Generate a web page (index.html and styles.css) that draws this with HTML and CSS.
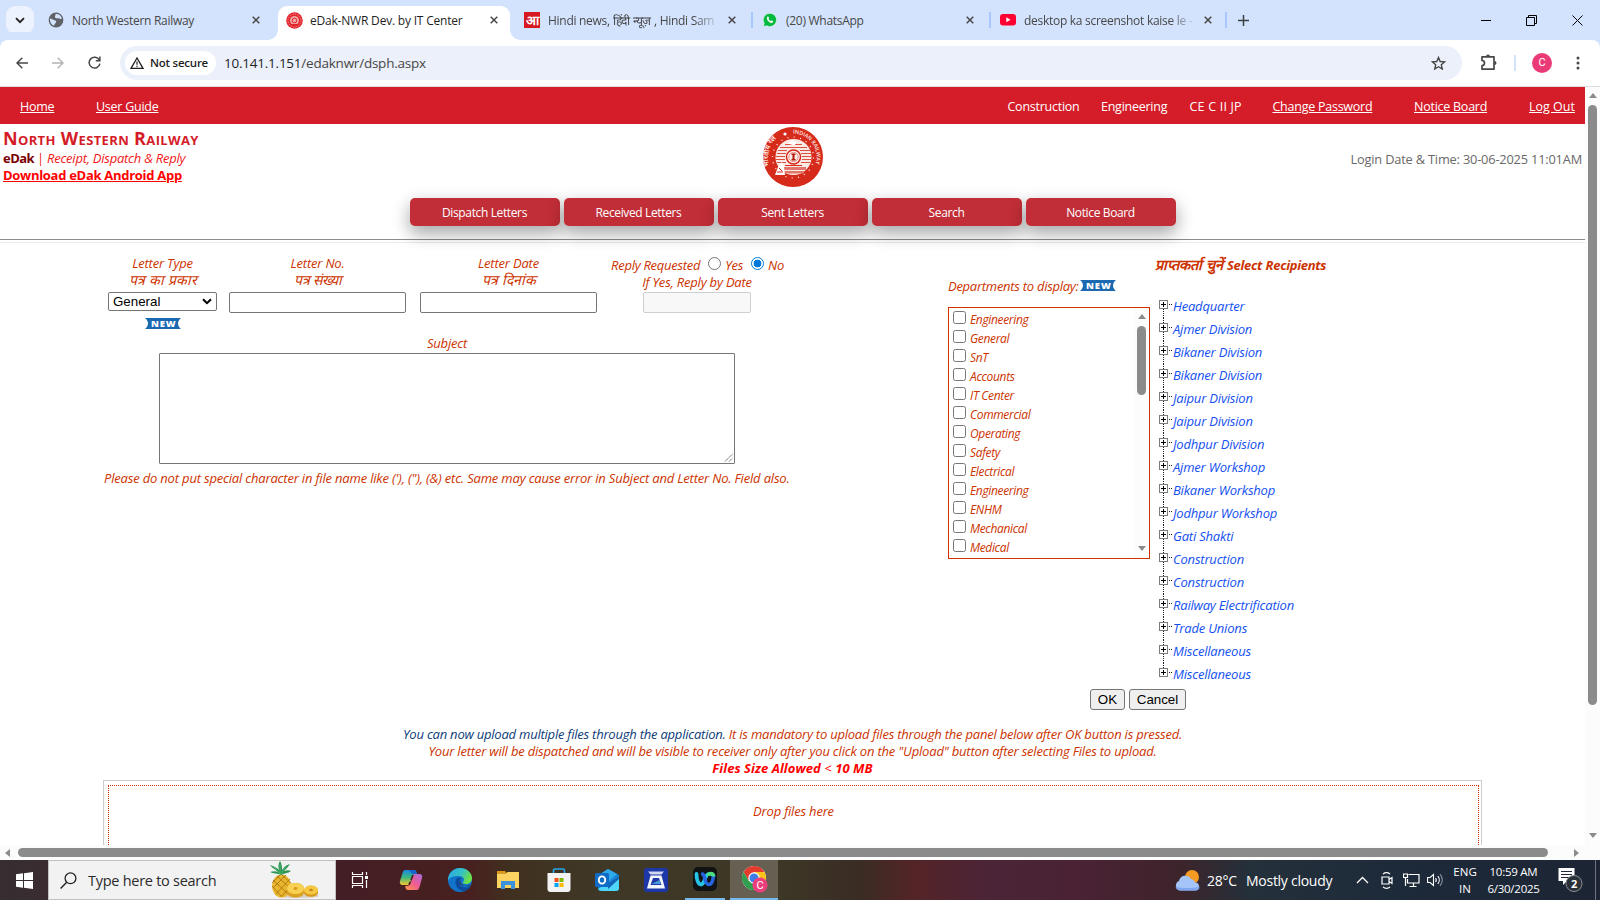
FILE: index.html
```html
<!DOCTYPE html>
<html lang="en">
<head>
<meta charset="utf-8">
<title>eDak-NWR Dev. by IT Center</title>
<link rel="stylesheet" href="styles.css">
</head>
<body>
<div class="desktop">

<header class="tabstrip">
  <div class="tab-search"><svg width="10" height="7" viewBox="0 0 10 7"><path d="M1 1.2l4 4 4-4" fill="none" stroke="#1f1f1f" stroke-width="1.8"/></svg></div>
  <div class="tab tab-1">
    <svg class="fav" width="16" height="16" viewBox="0 0 16 16"><circle cx="8" cy="8" r="7.4" fill="#5f6368"/><path d="M2 6.500c2 0 2.500 1.500 4.500 1.700 1.500.2 2 1 1.500 2.300-.5 1-1.700 1-1.900 3.300C3.500 13 1.700 10 2 6.500zM7.500 2c3-.6 5.700 1.500 6.300 4.500-1.800 1.300-2.600-.4-4.300-.2C8 6.400 6.500 5.700 7 4.200c.2-1 .9-.9.5-2.200z" fill="#d3e3fd"/></svg>
    <span class="tab-title">North Western Railway</span>
    <svg class="x" width="8" height="8" viewBox="0 0 8 8"><path d="M.7.7l6.600 6.600M7.300.7L.7 7.300"/></svg>
  </div>
  <div class="tab tab-2 active">
    <svg class="fav" width="17" height="17" viewBox="0 0 17 17"><circle cx="8.500" cy="8.500" r="8.300" fill="#e3262e"/><circle cx="8.500" cy="8.500" r="6.500" fill="none" stroke="#f79a9d" stroke-width=".8" stroke-dasharray="1.500 1"/><circle cx="8.500" cy="8.500" r="4.500" fill="#f6a5a7"/><circle cx="8.500" cy="8.500" r="2.300" fill="none" stroke="#e3262e"/><path d="M4 12.500h7" stroke="#e3262e"/></svg>
    <span class="tab-title">eDak-NWR Dev. by IT Center</span>
    <svg class="x" width="8" height="8" viewBox="0 0 8 8"><path d="M.7.7l6.600 6.600M7.300.7L.7 7.300"/></svg>
  </div>
  <div class="tab tab-3">
    <span class="fav amar">आ</span>
    <span class="tab-title fade">Hindi news, हिंदी न्यूज़ , Hindi Sam</span>
    <svg class="x" width="8" height="8" viewBox="0 0 8 8"><path d="M.7.7l6.600 6.600M7.300.7L.7 7.300"/></svg>
  </div>
  <div class="tab tab-4">
    <svg class="fav" width="14" height="14" viewBox="0 0 14 14"><path d="M7 .2a6.700 6.700 0 1 1-3.300 12.600L.3 13.700l.9-3.300A6.700 6.700 0 0 1 7 .2z" fill="#00b93f" stroke="#fff" stroke-width=".6"/><path d="M4.400 3.700c.5-.5 1-.3 1.200.2l.4 1c.1.400-.1.600-.5 1 .5 1 1.300 1.700 2.300 2.200.5-.5.7-.8 1-.6l1.200.6c.5.3 0 1.400-.7 1.700-1 .4-2.500-.1-3.900-1.500C3.900 6.800 3.500 4.800 4.400 3.700z" fill="#fff"/></svg>
    <span class="tab-title">(20) WhatsApp</span>
    <svg class="x" width="8" height="8" viewBox="0 0 8 8"><path d="M.7.7l6.600 6.600M7.300.7L.7 7.300"/></svg>
  </div>
  <div class="tab tab-5">
    <svg class="fav" width="16" height="12" viewBox="0 0 16 12"><rect width="16" height="11.500" rx="3" fill="#ff0033"/><path d="M6.300 3.300v5l4.200-2.500z" fill="#fff"/></svg>
    <span class="tab-title fade">desktop ka screenshot kaise le -</span>
    <svg class="x" width="8" height="8" viewBox="0 0 8 8"><path d="M.7.7l6.600 6.600M7.300.7L.7 7.300"/></svg>
  </div>
  <svg class="new-tab" width="11" height="11" viewBox="0 0 11 11"><path d="M5.500 0v11M0 5.500h11" stroke="#3c4043" stroke-width="1.500"/></svg>
  <div class="win">
    <svg width="10" height="11" viewBox="0 0 10 11"><path d="M0 5.500h10" stroke="#000"/></svg>
    <svg width="11" height="11" viewBox="0 0 11 11"><path d="M.5 2.500h8v8h-8zM2.500 2.500v-2h8v8h-2" fill="none" stroke="#000"/></svg>
    <svg width="11" height="11" viewBox="0 0 11 11"><path d="M.5.5l10 10M10.500.5l-10 10" stroke="#000"/></svg>
  </div>
</header>

<div class="toolbar">
  <svg width="12" height="12" viewBox="0 0 12 12"><path d="M12 6H1M6.300.7L1 6l5.300 5.300" fill="none" stroke="#474747" stroke-width="1.500"/></svg>
  <svg width="12" height="12" viewBox="0 0 12 12"><path d="M0 6h11M5.700.7L11 6l-5.300 5.300" fill="none" stroke="#b4b4b4" stroke-width="1.500"/></svg>
  <svg class="reload" width="13" height="13" viewBox="0 0 13 13"><path d="M11.300 4A5.400 5.400 0 1 0 11.900 7.600M11.900.6v4.100H7.800" fill="none" stroke="#474747" stroke-width="1.500"/></svg>
  <div class="omnibox">
    <span class="chip"><svg width="14" height="12" viewBox="0 0 14 12"><path d="M7 1L1 11.300h12z" fill="none" stroke="#1f1f1f" stroke-width="1.300"/><path d="M7 4.500v3.300M7 8.700V10" stroke="#1f1f1f" stroke-width="1.200"/></svg>Not secure</span>
    <span class="url"><b>10.141.1.151</b>/edaknwr/dsph.aspx</span>
    <svg class="star" width="15" height="14" viewBox="0 0 15 14"><path d="M7.500 1.500l1.700 4 4.300.4-3.200 2.900 1 4.200-3.800-2.300L3.700 13l1-4.200L1.500 5.900l4.300-.4z" fill="none" stroke="#474747" stroke-width="1.400"/></svg>
  </div>
  <svg class="ext" width="18" height="17" viewBox="0 0 18 17"><path d="M2 2.800h12v12.400H2v-3.700a2.500 2.500 0 0 0 0-5z" fill="none" stroke="#474747" stroke-width="1.700" stroke-linejoin="round"/><path d="M6 2.500a2 2 0 0 1 4 0zM14.500 7a2 2 0 0 1 0 4z" fill="#474747"/></svg>
  <i class="tb-sep"></i>
  <span class="avatar">C</span>
  <svg class="dots" width="4" height="14" viewBox="0 0 4 14"><g fill="#474747"><circle cx="2" cy="2" r="1.500"/><circle cx="2" cy="7" r="1.500"/><circle cx="2" cy="12" r="1.500"/></g></svg>
</div>

<div class="viewport">
 <div class="page">
  <nav class="topnav">
    <a>Home</a><a>User Guide</a><span>Construction</span><span>Engineering</span><span class="post">CE C II JP</span><a>Change Password</a><a>Notice Board</a><a class="out">Log Out</a>
  </nav>
  <div class="brand">
    <div class="brand-left">
      <div class="brand-name">North Western Railway</div>
      <div class="brand-sub"><b>eDak</b> | <i>Receipt, Dispatch &amp; Reply</i></div>
      <div class="brand-app">Download eDak Android App</div>
    </div>
    <svg class="logo" width="60" height="60" viewBox="0 0 60 60">
      <defs><path id="arcR" d="M30 6.500A23.500 23.500 0 0 1 41.750 50.350"/><path id="arcL" d="M6.500 38.500A25 25 0 0 1 18.500 7.800"/></defs>
      <circle cx="30" cy="30" r="30" fill="#d62a1a"/>
      <text class="logo-txt"><textPath href="#arcR">INDIAN RAILWAY</textPath></text>
      <text class="logo-txt dev"><textPath href="#arcL">भारतीय रेल</textPath></text>
      <circle cx="22" cy="7" r="1.600" fill="#fff"/>
      <circle cx="30" cy="30.500" r="20.500" fill="none" stroke="#ffe4de" stroke-width="1.200" stroke-dasharray="1.200 5.240"/>
      <circle cx="30.500" cy="30" r="18" fill="#fbe9e5"/>
      <path d="M22 17.500h17M17 20.500h27M15 23.500h9M37 23.500h10M14 26.500h9M38 26.500h10M13 29.500h9M39 29.500h9M13 32.500h9M39 32.500h9M14 35.500h9M38 35.500h9" stroke="#dc5040" stroke-width="1.100"/>
      <path d="M18 40h25v3H18zM20 44h21v2.500H22z" fill="#e2766a"/>
      <path d="M24.500 16.500l5-3 4 2-2 3z" fill="#fff"/>
      <circle cx="30.500" cy="30" r="7" fill="#fff" stroke="#d62a1a" stroke-width="1.500"/>
      <circle cx="30.500" cy="30" r="4.800" fill="#fbe9e5" stroke="#e2766a" stroke-width=".8"/>
      <path d="M28.500 26.500h4v1.500h-1v4h1v1.500h-4V32h1v-4h-1z" fill="#b4180c"/><path d="M22 38.500h17" stroke="#d62a1a"/>
      <path d="M12 48l3-8 4-5 2 5 1 8z" fill="#fff"/><path d="M14 45h6M16 41l3 3" stroke="#d62a1a"/>
    </svg>
    <div class="login">Login Date &amp; Time: 30-06-2025 11:01AM</div>
  </div>
  <div class="menu">
    <span>Dispatch Letters</span><span>Received Letters</span><span>Sent Letters</span><span>Search</span><span>Notice Board</span>
  </div>
  <div class="rule"></div>

  <div class="main">
    <section class="letter">
      <div class="fields">
        <label class="field">Letter Type<span class="hi">पत्र का प्रकार</span>
          <span class="select">General<svg width="10" height="7" viewBox="0 0 10 7"><path d="M1 1.200l4 4 4-4" fill="none" stroke="#000" stroke-width="2"/></svg></span>
          <svg class="new" width="36" height="11" viewBox="0 0 36 11"><path d="M0 0h36c-4 3.500-4 7.500 0 11H0c4-3.500 4-7.500 0-11z" fill="#1b69b1"/><text x="6" y="9.300" textLength="24.500">NEW</text></svg>
        </label>
        <label class="field">Letter No.<span class="hi">पत्र संख्या</span><span class="box"></span></label>
        <label class="field">Letter Date<span class="hi">पत्र दिनांक</span><span class="box"></span></label>
        <div class="field reply">
          <div class="radios">Reply Requested<i class="radio"></i>Yes<i class="radio on"></i>No</div>
          <div>If Yes, Reply by Date</div>
          <span class="box disabled"></span>
        </div>
      </div>
      <div class="subject">
        <div>Subject</div>
        <div class="area"><svg width="9" height="9" viewBox="0 0 9 9"><path d="M1 8.500L8.500 1M5 8.500L8.500 5" stroke="#555" stroke-width=".9" stroke-dasharray="1.600 .4"/></svg></div>
      </div>
      <p class="note">Please do not put special character in file name like ('), ("), (&amp;) etc. Same may cause error in Subject and Letter No. Field also.</p>
    </section>

    <section class="depts">
      <div class="depts-head">Departments to display:<svg class="new" width="36" height="11" viewBox="0 0 36 11"><path d="M0 0h36c-4 3.500-4 7.500 0 11H0c4-3.500 4-7.500 0-11z" fill="#1b69b1"/><text x="6" y="9.300" textLength="24.500">NEW</text></svg></div>
      <div class="list">
        <ul>
          <li><i></i>Engineering</li><li><i></i>General</li><li><i></i>SnT</li><li><i></i>Accounts</li><li><i></i>IT Center</li><li><i></i>Commercial</li><li><i></i>Operating</li><li><i></i>Safety</li><li><i></i>Electrical</li><li><i></i>Engineering</li><li><i></i>ENHM</li><li><i></i>Mechanical</li><li><i></i>Medical</li>
        </ul>
        <div class="vbar inner"><i class="up"></i><b></b><i class="down"></i></div>
      </div>
    </section>

    <section class="recips">
      <div class="recips-head"><span class="hi">प्राप्तकर्ता चुनें</span> Select Recipients</div>
      <ul class="tree">
        <li>Headquarter</li><li>Ajmer Division</li><li>Bikaner Division</li><li>Bikaner Division</li><li>Jaipur Division</li><li>Jaipur Division</li><li>Jodhpur Division</li><li>Ajmer Workshop</li><li>Bikaner Workshop</li><li>Jodhpur Workshop</li><li>Gati Shakti</li><li>Construction</li><li>Construction</li><li>Railway Electrification</li><li>Trade Unions</li><li>Miscellaneous</li><li>Miscellaneous</li>
      </ul>
    </section>
  </div>

  <div class="actions"><span class="btn ok">OK</span><span class="btn cancel">Cancel</span></div>
  <div class="messages">
    <div class="m1"><span>You can now upload multiple files through the application.</span> It is mandatory to upload files through the panel below after OK button is pressed.</div>
    <div>Your letter will be dispatched and will be visible to receiver only after you click on the "Upload" button after selecting Files to upload.</div>
    <div class="size"><b>Files Size Allowed</b> &lt; <b>10 MB</b></div>
  </div>
  <div class="drop"><div>Drop files here</div></div>
 </div>
 <div class="vbar outer"><i class="up"></i><b></b><i class="down"></i></div>
</div>
<div class="hbar"><i class="left"></i><b></b><i class="right"></i></div>

<footer class="taskbar">
  <div class="start"><svg width="17" height="17" viewBox="0 0 17 17"><path d="M0 2.300l7-1v6.700H0zM8 1.200L17 0v8H8zM0 9h7v6.700l-7-1zM8 9h9v8l-9-1.200z" fill="#fff"/></svg></div>
  <div class="search">
    <svg width="17" height="17" viewBox="0 0 17 17"><circle cx="10.500" cy="6.300" r="5.400" fill="none" stroke="#222" stroke-width="1.300"/><path d="M6.700 10.200L.6 16.400" stroke="#222" stroke-width="1.400"/></svg>
    <span>Type here to search</span>
    <svg class="pine" width="52" height="38" viewBox="0 0 52 38">
      <ellipse cx="30" cy="35" rx="20" ry="2" fill="#d6d2c6"/>
      <ellipse cx="12.500" cy="25" rx="9.500" ry="11.500" fill="#e9b52c"/>
      <path d="M4 19l15 14M3 25l10 11M8 15l14 13M13 14l9 8M21 18L7 33M22 25L12 36M17 14L4 27M11 14l-8 8" stroke="#ad7712" stroke-width=".9"/>
      <path d="M12 14C9 12 4 13 1 11c3-1 6-1 8 0C6 8 3 7 1 4c4 1 7 3 9 5C9 6 9 3 11 0c2 3 2 6 2 9 2-3 4-5 8-6-2 3-4 5-6 7 3-1 5-1 7 0-2 2-6 2-10 4z" fill="#2f9553"/><path d="M11 3v10M5 6l6 7M17 5l-5 8" stroke="#54bd78" stroke-width=".8"/>
      <path d="M18 28c0-8 17-8 17 0v4c-1 6-16 6-17 0z" fill="#dca022"/><ellipse cx="26.500" cy="27.500" rx="8.500" ry="5.500" fill="#f8d152"/><ellipse cx="26.500" cy="27.500" rx="2" ry="1.400" fill="#d99a22"/>
      <path d="M35 30c0-7 14-7 14 0v2c-1 5-13 5-14 0z" fill="#d9991c"/><ellipse cx="42" cy="29" rx="7" ry="4.500" fill="#f5c944"/><ellipse cx="42" cy="29" rx="2" ry="1.300" fill="#c98a18"/>
    </svg>
  </div>
  <div class="apps">
    <div><svg width="18" height="16" viewBox="0 0 18 16"><path d="M1.500 0v2.500h10V0M1.500 4.500h10v7h-10zM1.500 16v-2.500h10V16M15.500 0v3M15.500 8v8" fill="none" stroke="#fff" stroke-width="1.200"/><path d="M14 4h3v3h-3z" fill="#fff"/></svg></div>
    <div class="right"><svg width="24" height="24" viewBox="0 0 24 24"><defs><linearGradient id="c1" x1="0" y1="0" x2="0" y2="1"><stop offset="0" stop-color="#178ae4"/><stop offset=".5" stop-color="#3fb87c"/><stop offset="1" stop-color="#f2c92f"/></linearGradient><linearGradient id="c2" x1="1" y1="0" x2="0" y2="1"><stop offset="0" stop-color="#a86be0"/><stop offset=".5" stop-color="#ef5c93"/><stop offset="1" stop-color="#fb9646"/></linearGradient></defs><path d="M6 2h9c2 0 2.500 2 3 4l-4 1-4 10H4c-3 0-3.500-2-3-4L3.500 5C4 3 5 2 6 2z" fill="url(#c1)"/><path d="M9 2h6c2 0 2.500 2 3 4h-4c-2 0-2-3-5-4z" fill="#1763d0"/><path d="M18 22H9c-2 0-2.500-2-3-4 4 0 5-1 6-4l2-6c.5-1.500 1-2 3-2h3c3 0 3.500 2 3 4l-2.500 9c-.5 2-1.500 3-2.500 3z" fill="url(#c2)"/><path d="M12 12l2-5M10 17l1-3" stroke="#44201f" stroke-width="1.600"/></svg></div>
    <div class="right"><svg width="24" height="24" viewBox="0 0 24 24"><defs><linearGradient id="e1" x1="0" y1="0" x2="1" y2=".4"><stop offset="0" stop-color="#2ba7e6"/><stop offset=".6" stop-color="#35c1c4"/><stop offset="1" stop-color="#6be048"/></linearGradient></defs><circle cx="12" cy="12" r="12" fill="#1173c9"/><path d="M0 11C1 4 6 0 12 0c7 0 12 5 12 10 0 4-3 6-6 6-2.500 0-4-1-3-2 2-2 1-6-4-6C6 8 1 9 0 13z" fill="url(#e1)"/><path d="M9 10c-4 5 0 13 8 13 2-1 4-2 5.500-4.500-5 2-11 1-11-4.500 0-2 1-3 2-3.500-1-1-3-1.500-4.500-.5z" fill="#0b4c9c"/><path d="M12.500 12c-3 4 3 8 10 5-1 1.500-2.500 1.500-4 1.200-4-.4-7-2.700-6-6.200z" fill="#4a2521"/></svg></div>
    <div><svg width="22" height="18" viewBox="0 0 22 18"><path d="M0 0h8l2 2.500H0z" fill="#e39a12"/><path d="M0 2.500h9L10.500 1H22v16H0z" fill="#fdd462"/><path d="M4 18v-8h14v8h-4v-4H8v4z" fill="#3b92dc"/></svg></div>
    <div class="right"><svg width="24" height="24" viewBox="0 0 24 24"><path d="M6.500 6V2.500c0-1 .5-1.500 1.500-1.500h8c1 0 1.500.5 1.500 1.500V6" fill="none" stroke="#27a7e8" stroke-width="1.700"/><path d="M.5 5h23v16c0 2-1 3-3 3h-17c-2 0-3-1-3-3z" fill="#f3f3f3"/><path d="M7.500 10h4v4h-4z" fill="#f1511b"/><path d="M12.500 10h4v4h-4z" fill="#7fba00"/><path d="M7.500 15h4v4h-4z" fill="#00a4ef"/><path d="M12.500 15h4v4h-4z" fill="#fbb900"/></svg></div>
    <div><svg width="24" height="22" viewBox="0 0 24 22"><path d="M3 7l10-7 11 6v13c0 2-1 3-3 3H6c-2 0-3-1-3-3z" fill="#1682d4"/><path d="M5 5l8-5 9 5-8 7z" fill="#30a9ea"/><path d="M24 7v12c0 2-1 3-3 3H7c-2 0-3-1-4-2z" fill="#4fd6fb"/><path d="M24 7L13 14v6l11-10z" fill="#1164b8"/><rect y="4" width="14" height="14" rx="1.500" fill="#0f6cc6"/><ellipse cx="7" cy="11" rx="3.200" ry="3.600" fill="none" stroke="#fff" stroke-width="1.900"/></svg></div>
    <div><svg width="24" height="24" viewBox="0 0 24 24"><rect width="24" height="24" rx="3" fill="#1d36a8"/><path d="M4 3.500h16l-2.500 3h-11z" fill="#cfd6ef"/><path d="M6.500 7.500h11L21 20.500H3z" fill="#f4f6fd"/><path d="M9 10h6l2.500 7h-11z" fill="#1d36a8"/><path d="M7.500 16l8-4 1.300 4z" fill="#4a9ad9"/></svg></div>
    <div class="run"><svg width="24" height="24" viewBox="0 0 24 24"><rect width="24" height="24" rx="5" fill="#101214"/><path d="M3.500 7c0 5 1.500 10.500 4.500 10.500 4 0 3.500-9.500 7.500-10.500 2.500-.5 4.500.5 5 2" fill="none" stroke="#26c3e8" stroke-width="3.800" stroke-linecap="round"/><path d="M9.500 7c2.500 0 2 10.500 6 10.500 3.500 0 4.700-5 5-9" fill="none" stroke="#2765e0" stroke-width="3.500" stroke-linecap="round"/><path d="M15.500 7.200c2-1 4-.7 5 .8" fill="none" stroke="#4ddd7a" stroke-width="3.400" stroke-linecap="round"/></svg></div>
    <div class="run sel"><svg width="26" height="27" viewBox="0 0 26 27"><circle cx="12" cy="12" r="12" fill="#fff"/><path d="M12 0a12 12 0 0 0-10.400 6l5.200 9L12 6h10.400A12 12 0 0 0 12 0z" fill="#e33b2e"/><path d="M1.600 6a12 12 0 0 0 10.400 18l5.200-9H6.800z" fill="#2f9e4f"/><path d="M22.400 6H12l5.200 9L12 24A12 12 0 0 0 22.400 6z" fill="#fbc41c"/><circle cx="12" cy="12" r="5.700" fill="#fff"/><circle cx="12" cy="12" r="4.500" fill="#3c7de8"/><circle cx="18" cy="19" r="7.600" fill="#ea3f7c"/><text x="18" y="22.600" class="cbadge">C</text></svg></div>
  </div>
  <div class="tray">
    <svg class="wx" width="25" height="21" viewBox="0 0 25 21"><circle cx="17" cy="7" r="7" fill="#f59a23"/><path d="M5 20.500a5 5 0 0 1-1-9.500 6.500 6.500 0 0 1 12-2 5 5 0 0 1 4 3.500 4 4 0 0 1 0 8z" fill="#a5c4f8"/><path d="M5 20.500a5 5 0 0 1-4.500-4c5 2 17 2 24 0a4 4 0 0 1-4 4z" fill="#7fa6ef"/></svg>
    <span class="deg">28°C</span><span class="cond">Mostly cloudy</span>
    <svg class="chev" width="13" height="8" viewBox="0 0 13 8"><path d="M1 7l5.500-5.500L12 7" fill="none" stroke="#fff" stroke-width="1.300"/></svg>
    <svg class="meet" width="12" height="17" viewBox="0 0 12 17"><path d="M1 5h7v7H1zM8 7.500l3-2v6l-3-2M2 2c2-1.500 5-1.500 7 0M2 15c2 1.500 5 1.500 7 0" fill="none" stroke="#fff" stroke-width="1.200"/></svg>
    <svg class="net" width="17" height="15" viewBox="0 0 17 15"><path d="M5.500 1.500H16v8.500H4.500V6M.5 1h4v3.500h-4zM2.500 4.500V13M10.500 10v3.500M6.500 13.500h7" fill="none" stroke="#fff" stroke-width="1.200"/></svg>
    <svg class="vol" width="17" height="14" viewBox="0 0 17 14"><path d="M.6 4.500h2.600L6.500 1.500v11L3.200 9.500H.6z" fill="none" stroke="#fff" stroke-width="1.100"/><path d="M8.500 5c1 1.200 1 2.800 0 4M10.800 3.200c2 2.200 2 5.400 0 7.600" fill="none" stroke="#fff" stroke-width="1.100"/><path d="M13 1.200c3 3.400 3 8.200 0 11.600" fill="none" stroke="#8b93a0" stroke-width="1.100"/></svg>
    <div class="two lang">ENG<br>IN</div>
    <div class="two clock"><span>10:59 AM</span><br>6/30/2025</div>
    <svg class="notif" width="25" height="26" viewBox="0 0 25 26"><path d="M.5 1h16v13H9l-4 4v-4H.5z" fill="#fff"/><path d="M3 4.500h11M3 7.500h11M3 10.500h8" stroke="#1f2936" stroke-width="1.200"/><circle cx="16" cy="16.500" r="8" fill="#2a3038" stroke="#8b9098"/><text x="16" y="20.500" class="ncount">2</text></svg>
    <i class="peek"></i>
  </div>
</footer>
</div>
</body>
</html>
```
FILE: styles.css
```css
*{box-sizing:border-box}
body{margin:0;font-family:"Open Sans",sans-serif}
svg{display:block;flex:none}
ul{list-style:none;margin:0;padding:0}
.desktop{width:1600px;height:900px;display:flex;flex-direction:column;overflow:hidden;background:#fff}

/* browser tab strip */
.tabstrip{height:40px;flex:none;background:#d3e3fd;display:flex;align-items:flex-start;padding:0 0 0 6px;font-size:12px;letter-spacing:-.28px;color:#474747}
.tab-search{width:28px;height:28px;margin-top:6px;border-radius:9px;background:#ecf2fe;display:flex;align-items:center;justify-content:center}
.tab{height:34px;margin-top:6px;display:flex;align-items:center;padding-bottom:6px}
.tab .fav{flex:none}
.tab-title{flex:1;white-space:nowrap;line-height:26px;padding-top:2px}
.tab .x path{stroke:#474747;stroke-width:1.5}
.tab-1{width:244px;padding-left:14px;padding-right:18px}
.tab-1 .fav{margin-right:8px}
.tab-2{width:232px;padding-left:8px;padding-right:12px;position:relative}
.tab-2 .fav{margin-right:7px}
.tab-2 .tab-title{letter-spacing:-.2px}
.active{background:#fff;border-radius:9px 9px 0 0;color:#1f1f1f}
.active::before,.active::after{content:"";position:absolute;bottom:0;width:10px;height:10px}
.active::before{left:-10px;background:radial-gradient(circle at 0 0,transparent 9.500px,#fff 10px)}
.active::after{right:-10px;background:radial-gradient(circle at 100% 0,transparent 9.500px,#fff 10px)}
.tab-3{width:241px;padding-left:14px;padding-right:15px}
.amar{width:16px;height:16px;background:#d61820;color:#fff;font:bold 13px/17px "Open Sans",sans-serif;text-align:center;margin-right:8px}
.fade{-webkit-mask-image:linear-gradient(90deg,#000 calc(100% - 34px),transparent calc(100% - 8px));mask-image:linear-gradient(90deg,#000 calc(100% - 34px),transparent calc(100% - 8px))}
.tab-4,.tab-5{position:relative}
.tab-4{width:238px;padding-left:12px;padding-right:15px}
.tab-4 .fav{margin-right:9px}
.tab-5{width:238px;padding-left:11px;padding-right:15px}
.tab-5 .fav{margin-right:8px}
.tab-4::before,.tab-5::before,.tab-5::after{content:"";position:absolute;left:0;top:6px;width:2px;height:16px;background:#a8c7fa}
.tab-5::after{left:auto;right:0}
.new-tab{margin:15px 0 0 11px}
.win{margin:15px 17px 0 auto;display:flex;gap:35px}

/* toolbar */
.toolbar{height:47px;flex:none;display:flex;align-items:center;padding:0 0 1px 16px;border-bottom:1px solid #dadce0;background:#fff;border-radius:8px 8px 0 0;box-shadow:0 -8px 0 0 #d3e3fd}
.toolbar>svg{margin-right:24px}
.toolbar>.reload{margin-left:-.5px;margin-right:24.500px}
.omnibox{width:1342px;height:34px;border-radius:17px;background:#ebf0fa;display:flex;align-items:center;padding:0 16px 0 5px;margin-left:-5px}
.chip{width:91px;height:24px;border-radius:12px;background:#fff;display:flex;align-items:center;gap:6px;padding-left:5px;font-size:11.500px;font-weight:600;letter-spacing:-.24px;color:#1f1f1f;white-space:nowrap}
.url{margin-left:8px;font-size:13.500px;letter-spacing:-.23px;color:#474747;flex:1}
.url b{font-weight:400;color:#1f1f1f}
.toolbar>.ext{margin:0 0 0 18px}
.tb-sep{width:2px;height:16px;background:#d3e3fd;margin-left:16px}
.avatar{width:20px;height:20px;border-radius:50%;background:#ea3b78;color:#fff;font:11px/20px Roboto,sans-serif;text-align:center;margin-left:16px}
.toolbar>.dots{margin:0 0 0 24px}

/* page */
.viewport{height:758px;flex:none;display:flex}
.page{width:1585px;height:758px;overflow:hidden;color:#cc3300;font-size:13px;letter-spacing:-.19px;line-height:17px}
.topnav{height:37px;background:#d51c29;color:#fff;display:grid;grid-template-columns:76px 911.500px 93.500px 88.500px 83px 141.500px 115px 1fr;align-items:center;padding:2px 0 0 20px;font-size:12.500px;letter-spacing:-.25px}
.topnav a{text-decoration:underline}
.topnav .post{letter-spacing:.2px}
.topnav .out{letter-spacing:0}
.brand{height:66px;display:grid;grid-template-columns:1fr 60px 1fr;padding:0 3px}
.brand-name{font-variant:small-caps;font-weight:bold;font-size:18px;line-height:20px;height:22px;color:#d51c29;letter-spacing:.35px;margin-top:4px}
.brand-sub{color:#f01818;line-height:17px;letter-spacing:-.3px}
.brand-sub b{color:#7a0000;letter-spacing:-.55px}
.brand-sub i{letter-spacing:-.24px}
.brand-app{color:#f00;font-weight:bold;text-decoration:underline;letter-spacing:-.29px;line-height:17px}
.logo{margin-top:3px}
.logo-txt{font:600 5.500px "Open Sans",sans-serif;fill:#ffe9e4;letter-spacing:-.1px}
.logo-txt.dev{font-size:7px;letter-spacing:0}
.login{text-align:right;color:#696969;font-size:12.800px;letter-spacing:-.18px;margin-top:27px}
.menu{margin-top:8px;height:28px;display:flex;gap:4px;justify-content:center}
.menu span{width:150px;height:28px;background:#c22e37;border-radius:5px;color:#fff;text-align:center;line-height:28px;padding-top:1px;font-size:12px;letter-spacing:-.37px;box-shadow:0 8px 16px 0 rgba(0,0,0,.2),0 6px 20px 0 rgba(0,0,0,.19)}
.rule{margin-top:13px;height:4px;border-top:1px solid #8c8c8c;border-bottom:1px solid #ebebeb}

.main{display:flex;height:446px;font-style:italic}
.letter{width:948px;padding-top:12px}
.fields{display:grid;grid-template-columns:109px 177px 177px 200px;margin-left:108px;column-gap:12px;height:79px}
.field{display:flex;flex-direction:column;align-items:center}
.field:nth-child(3){margin-left:2px;margin-right:-2px}
.hi{font-size:14px;letter-spacing:0}
.field .hi{height:17px;line-height:16px;padding-left:1px}
.select{width:109px;height:19px;margin-top:3px;border:1px solid #767676;border-radius:2px;background:#fff;color:#000;font:13.330px/16px "Liberation Sans",sans-serif;display:flex;justify-content:space-between;align-items:center;padding:0 4px;letter-spacing:0}
.new{margin-top:7px}
.new text{font:800 9.500px "Open Sans",sans-serif;fill:#fff}
.box{width:177px;height:21px;margin-top:3px;border:1px solid #767676;border-radius:2px;background:#fff}
.disabled{width:108px;background:#f8f8f8;border-color:#cfcfcf;margin-top:1px}
.reply{padding-top:2px;margin-left:-11px;margin-right:9px;letter-spacing:-.2px}
.radios{display:flex;align-items:center;letter-spacing:-.28px;padding-left:1px}
.radio{width:13px;height:13px;border:1px solid #767676;border-radius:50%;margin:-4px 4px 0 8px}
.radio.on{border-color:#0078dc;background:radial-gradient(circle,#0078dc 3.600px,#fff 4.200px)}
.subject{width:576px;margin:0 0 0 159px;padding-top:1px;text-align:center}
.area{height:111px;margin-top:1px;border:1px solid #767676;border-radius:1px;display:flex;align-items:flex-end;justify-content:flex-end;padding:1px}
.note{margin:6px 0 0 104px;white-space:nowrap;letter-spacing:-.182px}

.depts{width:202px}
.depts-head{display:flex;margin-top:35px;letter-spacing:-.27px}
.depts-head .new{margin:2px 0 0 1px}
.list{margin-top:12px;height:252px;border:1px solid #d13000;display:flex;justify-content:space-between;overflow:hidden}
.list ul{padding:3px 0 0 4px;font-size:12px;letter-spacing:-.34px}
.list li{height:19px;display:flex;gap:5px;line-height:17px;white-space:nowrap}
.list li i{width:13px;height:13px;border:1px solid #767676;border-radius:2.500px;margin-right:-1px;flex:none}

.recips{padding-left:5px}
.recips-head{font-weight:bold;margin-top:13px;height:17px;letter-spacing:-.29px;white-space:nowrap;word-spacing:.5px}
.recips-head .hi{font-size:14.600px;letter-spacing:0}
.tree{margin-top:22px;width:200px;color:#1450f0}
.tree li{height:23px;line-height:23px;padding-left:18px;white-space:nowrap;background:
 linear-gradient(#000,#000) 6px 9px/5px 1px no-repeat,
 linear-gradient(#000,#000) 8px 7px/1px 5px no-repeat,
 linear-gradient(#fff,#fff) 5px 6px/7px 7px no-repeat,
 linear-gradient(#7c7c7c,#7c7c7c) 4px 5px/9px 9px no-repeat,
 repeating-linear-gradient(90deg,#222 0 1px,transparent 1px 2px) 14px 9px/3px 1px no-repeat,
 repeating-linear-gradient(180deg,#222 0 1px,transparent 1px 2px) 8px 0/1px 23px no-repeat}
.tree li:first-child{background-size:5px 1px,1px 5px,7px 7px,9px 9px,3px 1px,1px 17px;background-position:6px 9px,8px 7px,5px 6px,4px 5px,14px 9px,8px 6px}
.tree li:last-child{background-size:5px 1px,1px 5px,7px 7px,9px 9px,3px 1px,1px 9px}

.actions{display:flex;gap:4px;padding-left:1090px}
.btn{height:21px;border:1px solid #767676;border-radius:3px;background:#efefef;color:#000;font:13.330px/19px "Liberation Sans",sans-serif;letter-spacing:0;text-align:center}
.ok{width:35px}
.cancel{width:57px}
.messages{margin-top:16px;text-align:center;font-style:italic}
.m1 span{color:#0c3c78}
.m1{letter-spacing:-.22px}
.size{color:#f00;letter-spacing:.06px}
.drop{width:1379px;height:100px;margin:3px 0 0 103px;border:1px solid #ccc;padding:4px 2px 4px 4px;font-style:italic;text-align:center}
.drop div{height:100px;border:1px dotted #cc3300;padding-top:17px}

/* scrollbars */
.vbar{width:15px;display:flex;flex-direction:column;align-items:center;background:#fcfcfc}
.vbar b,.hbar b{background:#8b8b8b;border-radius:5px;flex:none}
.vbar b{width:9px}
.up,.down{border:4.500px solid transparent}
.up{border-top:0;border-bottom:5px solid #8b8b8b}
.down{border-bottom:0;border-top:5px solid #8b8b8b;margin-top:auto}
.outer .up{margin-top:6px}
.outer b{height:600px;margin-top:7px}
.outer .down{margin-bottom:7px}
.inner .up{margin-top:6px}
.inner b{height:69px;margin-top:7px}
.inner .down{margin-bottom:7px}
.hbar{height:15px;flex:none;background:#fcfcfc;display:flex;align-items:center;padding:0 21px 0 5px}
.hbar b{width:1530px;height:9px;margin-left:8px}
.hbar i{border:4.500px solid transparent}
.hbar .left{border-left:0;border-right:5px solid #8b8b8b}
.hbar .right{border-right:0;border-left:5px solid #8b8b8b;margin-left:auto}

/* taskbar */
.taskbar{height:40px;flex:none;display:flex;color:#fff;background:linear-gradient(90deg,#362e31 0,#3a2c30 48px,#431e25 336px,#48201f 470px,#40301f 510px,#3f3826 600px,#3d3726 780px,#3a2c24 860px,#542427 915px,#4b2437 990px,#4a2234 1080px,#3d242b 1180px,#24303a 1250px,#1d2a3a 1400px,#1d2534 1600px)}
.start{width:48px;display:flex;align-items:center;justify-content:center}
.search{width:288px;background:#f2f2f2;border:1px solid #c6c0c1;display:flex;align-items:center;padding-left:11px;color:#2b2b2b;font-size:14.500px;letter-spacing:-.27px}
.search span{margin-left:11px;width:181px}
.apps{display:flex}
.apps div{width:49.300px;padding-right:1px;display:flex;align-items:center;justify-content:center}
.apps .right{padding:0 0 0 2px}
.apps .run{border-bottom:2px solid #76b9ed;padding:0}
.apps .run:nth-child(8){width:40px;margin:0 5px 0 4px}
.apps .sel{width:48px;background:#666052;padding-left:2px}
.cbadge{font:11px Roboto,sans-serif;fill:#fff;text-anchor:middle}
.tray{margin-left:auto;display:flex;align-items:center;font-size:14px;letter-spacing:-.27px}
.deg{margin-left:7px;width:39px;white-space:nowrap}
.cond{width:110px;white-space:nowrap}
.chev{margin-right:12px}
.meet{margin-right:10px}
.net{margin-right:7px}
.two{font-size:11.500px;letter-spacing:-.25px;line-height:17px;text-align:center;white-space:nowrap;margin-top:-1px}
.lang{width:24px;margin-left:9px;letter-spacing:.1px}
.clock{width:53px;margin-left:10px}
.notif{margin-left:18px}
.ncount{font:bold 11px "Open Sans",sans-serif;fill:#fff;text-anchor:middle}
.peek{width:1px;height:40px;background:#6d7480;margin:0 4px 0 12px}
```
